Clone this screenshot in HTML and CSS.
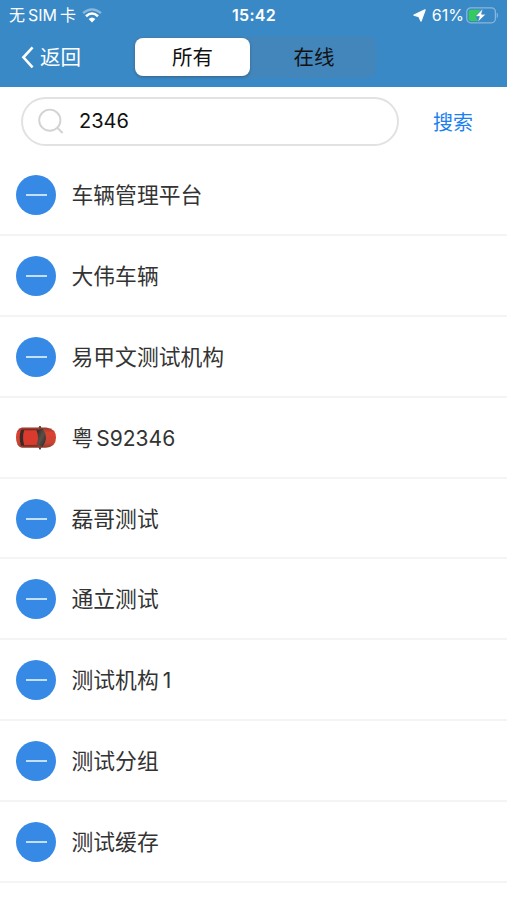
FILE: index.html
```html
<!DOCTYPE html>
<html lang="zh-CN">
<head>
  <meta charset="UTF-8">
  <meta name="viewport" content="width=device-width, initial-scale=1.0">
  <title>车辆列表</title>
  <link rel="stylesheet" href="styles.css">
</head>
<body>
  <header class="header">
    <div class="status-bar">
      <div class="status-left">
        <span class="carrier">无<span class="sim">SIM</span>卡</span>
        <svg class="wifi" width="20" height="15" viewBox="0 0 20 15">
          <path d="M1 5.2Q10 -2.6 19 5.2" fill="none" stroke="#fff" stroke-width="2.2" opacity="0.4"/>
          <path d="M4 8.2Q10 2.8 16 8.2" fill="none" stroke="#fff" stroke-width="2.6"/>
          <path d="M6.6 11Q10 8 13.4 11L10 14.4Z" fill="#fff"/>
        </svg>
      </div>
      <span class="clock">15:42</span>
      <div class="status-right">
        <svg class="location" width="13" height="13" viewBox="0 0 13 13">
          <path d="M12 0.9L8 12L6 7.6L1 6.2Z" fill="#fff" stroke="#fff" stroke-width="1.4" stroke-linejoin="round"/>
        </svg>
        <span class="percent">61%</span>
        <svg class="battery" width="33" height="17" viewBox="0 0 33 17">
          <rect x="0.8" y="0.8" width="28.6" height="15" rx="4" fill="none" stroke="#86b7df" stroke-width="1.3"/>
          <path d="M31 6Q32.6 8.3 31 10.6Z" fill="#86b7df" stroke="#86b7df" stroke-width="0.6"/>
          <path d="M4.7 2.7H14.5L9.5 9.5L12 13.9H4.7Q2.7 13.9 2.7 11.9V4.7Q2.7 2.7 4.7 2.7Z" fill="#35cb5c"/>
          <path d="M16.8 1.6L9.2 9.5H13.4L11.7 15.2L20 7.2H15.6Z" fill="#fff" stroke="#3989c7" stroke-width="0.7"/>
        </svg>
      </div>
    </div>

    <nav class="nav">
      <a class="back">
        <svg width="14" height="24" viewBox="0 0 14 24">
          <path d="M12.6 2.3L3.4 12.3L12.6 22.3" fill="none" stroke="#fff" stroke-width="2.6"/>
        </svg>
        <span>返回</span>
      </a>
      <div class="segmented">
        <div class="segment active">所有</div>
        <div class="segment">在线</div>
      </div>
    </nav>
  </header>

  <div class="search">
    <div class="search-box">
      <svg width="27" height="27" viewBox="0 0 27 27">
        <circle cx="11.8" cy="12.2" r="10.6" fill="none" stroke="#d3d3d3" stroke-width="1.9"/>
        <path d="M19.3 19.8L24.6 25" fill="none" stroke="#d3d3d3" stroke-width="2"/>
      </svg>
      <span class="search-text">2346</span>
    </div>
    <a class="search-button">搜索</a>
  </div>

  <ul class="list">
    <li class="item"><span class="icon"></span><span class="name">车辆管理平台</span></li>
    <li class="item"><span class="icon"></span><span class="name">大伟车辆</span></li>
    <li class="item"><span class="icon"></span><span class="name">易甲文测试机构</span></li>
    <li class="item">
      <svg class="car" width="42" height="26" viewBox="0 0 42 26">
        <defs>
          <linearGradient id="body" x1="0" y1="0" x2="0" y2="1">
            <stop offset="0" stop-color="#96392c"/>
            <stop offset="0.25" stop-color="#dc4232"/>
            <stop offset="0.75" stop-color="#c84433"/>
            <stop offset="1" stop-color="#8c3a2d"/>
          </linearGradient>
          <linearGradient id="glass" x1="0" y1="0" x2="1" y2="1">
            <stop offset="0" stop-color="#252323"/>
            <stop offset="0.5" stop-color="#5b5048"/>
            <stop offset="1" stop-color="#272322"/>
          </linearGradient>
        </defs>
        <path d="M25 1L26.4 4V21L25 24.4L23.4 21V4Z" fill="#553c34" stroke="#553c34"/>
        <path d="M7 2.5H31Q41 3.5 41 12.5Q41 21.8 31 22.8H7Q1 21.4 1 12.5Q1 3.8 7 2.5Z" fill="url(#body)"/>
        <path d="M8 4H24L22 5.4H9Z" fill="#7a2f27"/>
        <path d="M8 21.4H24L22 20H9Z" fill="#7a2f27"/>
        <rect x="8.5" y="5.6" width="15" height="14.2" fill="#d93a2e"/>
        <path d="M6 4.8Q7.5 4.2 9.2 5Q7 12.5 9.2 20.4Q7.5 21.2 6 20.6Q3.4 12.5 6 4.8Z" fill="#3c2826"/>
        <path d="M21.5 5.5L27.5 3.3Q34.5 12.5 27.5 22L21.5 19.8Q24.5 12.5 21.5 5.5Z" fill="url(#glass)"/>
      </svg>
      <span class="name">粤<span class="plate">S92346</span></span>
    </li>
    <li class="item"><span class="icon"></span><span class="name">磊哥测试</span></li>
    <li class="item"><span class="icon"></span><span class="name">通立测试</span></li>
    <li class="item"><span class="icon"></span><span class="name">测试机构<span class="digit">1</span></span></li>
    <li class="item"><span class="icon"></span><span class="name">测试分组</span></li>
    <li class="item"><span class="icon"></span><span class="name">测试缓存</span></li>
  </ul>
</body>
</html>
```

FILE: styles.css
```css
:root {
  --primary: #3989c7;
  --icon-blue: #368ae5;
  --link: #1c80f0;
  --text: #333;
}

* {
  box-sizing: border-box;
  margin: 0;
  padding: 0;
}

body {
  height: 900px;
  overflow: hidden;
  background: #fff;
  color: var(--text);
  font-family: Inter, "Noto Sans CJK SC", sans-serif;
}

.header {
  height: 87px;
  background: var(--primary);
  color: #fff;
}

.status-bar {
  display: grid;
  grid-template-columns: 1fr auto 1fr;
  align-items: center;
  height: 30px;
  padding: 0 8px 0 9px;
  font-size: 16px;
  line-height: 30px;
}

.status-left,
.status-right {
  display: flex;
  align-items: center;
}

.status-right {
  justify-content: flex-end;
}

.sim {
  margin: 0 3px;
}

.wifi {
  margin-left: 6px;
}

.clock {
  font-weight: 600;
  letter-spacing: 0.3px;
}

.percent {
  margin: 0 2px 0 6px;
}

.nav {
  display: flex;
  align-items: center;
  height: 54px;
  padding-left: 20px;
}

.back {
  display: flex;
  align-items: center;
  gap: 6px;
  width: 113px;
  font-size: 20.5px;
  line-height: 24px;
}

.back span {
  padding-top: 2px;
}

.segmented {
  display: flex;
  width: 243px;
  height: 42px;
  padding: 2px;
  border-radius: 9px;
  background: #4286bb;
  color: #111;
}

.segment {
  flex: 1;
  padding-left: 4px;
  font-size: 20.5px;
  line-height: 39px;
  text-align: center;
}

.segment.active {
  flex: 0 0 115px;
  height: 38px;
  padding-left: 0;
  border-radius: 8px;
  background: #fff;
  box-shadow: 0 1px 3px rgba(0, 0, 0, 0.25);
}

.search {
  display: flex;
  align-items: center;
  height: 68px;
  padding: 0 34px 0 21px;
}

.search-box {
  display: flex;
  align-items: center;
  width: 378px;
  height: 49px;
  padding-left: 15px;
  border: 2px solid #e2e2e2;
  border-radius: 25px;
}

.search-text {
  margin-left: 14px;
  color: #111;
  font-size: 20px;
}

.search-button {
  margin-left: auto;
  color: var(--link);
  font-size: 20px;
}

.list {
  list-style: none;
}

.item {
  display: flex;
  align-items: center;
  height: 80.9px;
  padding: 1px 0 0 16px;
  border-bottom: 2px solid #f4f4f4;
  font-size: 21.8px;
}

.name {
  padding-bottom: 3px;
}

.icon {
  display: flex;
  align-items: center;
  justify-content: center;
  width: 40px;
  height: 40px;
  margin-right: 15.5px;
  border-radius: 50%;
  background: var(--icon-blue);
}

.icon::before {
  content: "";
  width: 21px;
  height: 2px;
  background: #c3dff9;
}

.car {
  margin: 0 14.5px 0 -1px;
}

.plate {
  margin-left: 3px;
  font-size: 21px;
}

.digit {
  margin-left: 4px;
  font-size: 21px;
}
```
